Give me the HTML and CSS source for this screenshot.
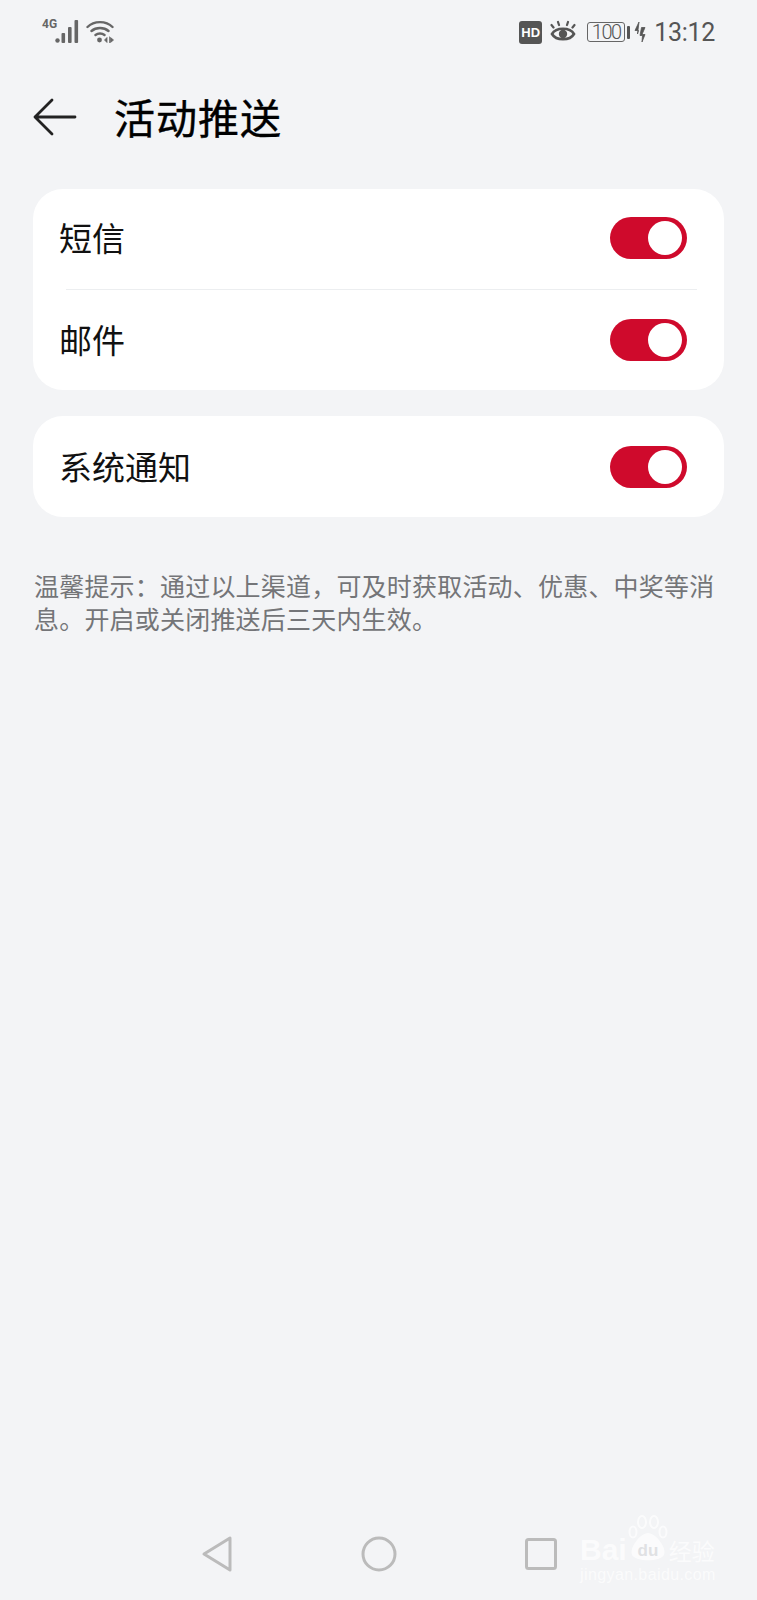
FILE: index.html
```html
<!DOCTYPE html>
<html lang="zh-CN">
<head>
  <meta charset="UTF-8">
  <meta name="viewport" content="width=device-width, initial-scale=1.0">
  <title>活动推送</title>
  <link rel="stylesheet" href="styles.css">
</head>
<body>
  <div class="page">
    <!-- Status bar -->
    <div class="status-bar">
      <div class="status-left">
        <span class="net-label">4G</span>
        <svg class="signal" width="25" height="24" viewBox="0 0 25 24">
          <circle cx="2.500" cy="20.500" r="2.200" fill="#666"/>
          <rect x="6.500" y="13" width="3.600" height="10" rx="1" fill="#666"/>
          <rect x="13" y="7" width="3.600" height="16" rx="1" fill="#666"/>
          <rect x="19.500" y="0" width="3.600" height="23" rx="1" fill="#666"/>
        </svg>
        <svg class="wifi" width="28" height="24" viewBox="0 0 28 24">
          <path d="M1.500 7C8 0.500 20 0.500 26.500 7M5.500 11C10 7 18 7 22.500 11M9.500 15C12 13 16 13 18.500 15" fill="none" stroke="#666" stroke-width="2.400" stroke-linecap="round"/>
          <circle cx="13.500" cy="20" r="2.400" fill="#666"/>
          <path d="M18.500 20L21 17.500V22.500ZM23.500 16.500V23M24.500 17.500L27.500 20L24.500 22.500Z" fill="#666" stroke="#666" stroke-width="0.800"/>
        </svg>
      </div>
      <div class="status-right">
        <span class="hd-badge">HD</span>
        <svg class="eye" width="26" height="24" viewBox="0 0 26 24">
          <path d="M2 14C6 7 20 7 24 14C20 21 6 21 2 14Z" fill="none" stroke="#555" stroke-width="2.600"/>
          <circle cx="13" cy="14" r="4.200" fill="#555"/>
          <path d="M3.500 7.500L1.500 5M9 5L8 2M17 5L18 2M22.500 7.500L24.500 5" stroke="#555" stroke-width="2.200" stroke-linecap="round"/>
        </svg>
        <span class="battery">100</span>
        <span class="battery-tip"></span>
        <svg class="bolt" width="12" height="20" viewBox="0 0 12 20">
          <path d="M5 0L1 8.500H4.500L3.500 12ZM7.500 5.500H11L8 12.500H11L8 20L8.500 13.500H6Z" fill="#555" stroke="#555" stroke-width="0.800" stroke-linejoin="round"/>
        </svg>
        <span class="time">13:12</span>
      </div>
    </div>

    <!-- Title bar -->
    <div class="title-bar">
      <svg class="back" width="44" height="38" viewBox="0 0 44 38">
        <path d="M42 19H2M19 2L2 19L19 36" fill="none" stroke="#222" stroke-width="2.800" stroke-linecap="round" stroke-linejoin="round"/>
      </svg>
      <h1>活动推送</h1>
    </div>

    <!-- Settings -->
    <div class="card">
      <div class="row row-first">
        <span class="label">短信</span>
        <span class="toggle"><span class="knob"></span></span>
      </div>
      <div class="divider"></div>
      <div class="row">
        <span class="label">邮件</span>
        <span class="toggle"><span class="knob"></span></span>
      </div>
    </div>

    <div class="card">
      <div class="row row-single">
        <span class="label">系统通知</span>
        <span class="toggle"><span class="knob"></span></span>
      </div>
    </div>

    <p class="hint">温馨提示：通过以上渠道，可及时获取活动、优惠、中奖等消息。开启或关闭推送后三天内生效。</p>

    <!-- Navigation bar -->
    <div class="nav-bar">
      <svg width="32" height="38" viewBox="0 0 32 38">
        <path d="M29 3V35L3 19Z" fill="none" stroke="#bbb" stroke-width="3" stroke-linejoin="round"/>
      </svg>
      <svg width="36" height="36" viewBox="0 0 36 36">
        <circle cx="18" cy="18" r="16" fill="none" stroke="#bbb" stroke-width="3"/>
      </svg>
      <svg width="32" height="32" viewBox="0 0 32 32">
        <rect x="1.500" y="1.500" width="29" height="29" rx="2" fill="none" stroke="#bbb" stroke-width="3"/>
      </svg>
    </div>

    <!-- Watermark -->
    <div class="watermark">
      <div class="mark-top">
        <span class="mark-bai">Bai</span>
        <svg class="paw" width="42" height="50" viewBox="0 0 42 50">
          <ellipse cx="15" cy="7" rx="4" ry="6" fill="none" stroke="#fff" stroke-width="2"/>
          <ellipse cx="27" cy="7" rx="4" ry="6" fill="none" stroke="#fff" stroke-width="2"/>
          <ellipse cx="6" cy="17" rx="3.500" ry="5.500" fill="none" stroke="#fff" stroke-width="2"/>
          <ellipse cx="36" cy="17" rx="3.500" ry="5.500" fill="none" stroke="#fff" stroke-width="2"/>
          <path d="M21 18C29 18 40 33 37 40C33 47 9 47 5 40C2 33 13 18 21 18Z" fill="#fff"/>
          <text class="paw-text" x="21" y="41" text-anchor="middle">du</text>
        </svg>
        <span class="mark-cn">经验</span>
      </div>
      <div class="mark-url">jingyan.baidu.com</div>
    </div>
  </div>
</body>
</html>
```

FILE: styles.css
```css
body {
  margin: 0;
  background-color: #f3f4f6;
  font-family: "Noto Sans CJK SC", "Noto Sans", sans-serif;
  color: #111;
}
.page {
  position: relative;
  display: flex;
  flex-direction: column;
  height: 1600px;
  overflow: hidden;
}
.status-bar {
  display: flex;
  justify-content: space-between;
  align-items: center;
  height: 64px;
  padding: 0 42px;
  color: #555;
}
.status-left {
  display: flex;
  align-items: flex-start;
}
.net-label {
  font-family: "Roboto", sans-serif;
  font-size: 12px;
  font-weight: 700;
  line-height: 12px;
  color: #666;
  margin-top: -2px;
}
.signal {
  margin: 0 6px 0 -2px;
}
.status-right {
  display: flex;
  align-items: center;
}
.hd-badge {
  display: flex;
  align-items: center;
  justify-content: center;
  width: 23px;
  height: 23px;
  border-radius: 3px;
  background-color: #555;
  color: #fff;
  font-family: "Liberation Sans", sans-serif;
  font-size: 13px;
  font-weight: 700;
  margin-right: 8px;
}
.eye {
  margin-right: 11px;
}
.battery {
  width: 38px;
  height: 20px;
  border: 1px solid #666;
  border-radius: 3px;
  box-sizing: border-box;
  font-family: "Roboto", sans-serif;
  font-size: 20px;
  letter-spacing: -1.500px;
  line-height: 18px;
  text-align: center;
  font-weight: 300;
}
.battery-tip {
  width: 3px;
  height: 13px;
  border-radius: 1px;
  background-color: #555;
  margin: 0 4px 0 2px;
}
.time {
  font-family: "Roboto", sans-serif;
  font-size: 25px;
  letter-spacing: -0.300px;
  margin-left: 8px;
}
.title-bar {
  display: flex;
  align-items: center;
  height: 106px;
  padding: 0 0 2px 33px;
  box-sizing: border-box;
}
.back {
  margin-top: 2px;
}
.title-bar h1 {
  margin: 0 0 0 37px;
  font-size: 41px;
  font-weight: 400;
  letter-spacing: 1px;
  line-height: 50px;
  color: #000;
  -webkit-text-stroke: 0.4px #000;
}
.card {
  margin: 19px 33px 0;
  background-color: #fff;
  border-radius: 30px;
  overflow: hidden;
}
.card + .card {
  margin-top: 26px;
}
.row {
  display: flex;
  justify-content: space-between;
  align-items: center;
  height: 100px;
  padding: 0 37px 0 26px;
  box-sizing: border-box;
  font-size: 33px;
  line-height: 40px;
}
.label {
  margin-top: -2px;
}
.row-first {
  padding-bottom: 2px;
}
.row-single {
  height: 101px;
}
.divider {
  height: 1px;
  margin: 0 27px 0 33px;
  background-color: #eceef0;
}
.toggle {
  display: flex;
  justify-content: flex-end;
  align-items: center;
  width: 77px;
  height: 42px;
  padding-right: 5px;
  box-sizing: border-box;
  border-radius: 21px;
  background-color: #cf0a2c;
}
.knob {
  width: 34px;
  height: 34px;
  border-radius: 50%;
  background-color: #fff;
}
.hint {
  margin: 52px 33px 0 34px;
  font-size: 25px;
  line-height: 33px;
  color: #747578;
  letter-spacing: 0.2px;
}
.nav-bar {
  display: flex;
  justify-content: center;
  align-items: center;
  gap: 128px;
  margin-top: auto;
  padding-bottom: 27px;
}
.watermark {
  position: absolute;
  left: 580px;
  top: 1515px;
  color: #fff;
  opacity: 0.7;
}
.mark-top {
  display: flex;
  align-items: flex-end;
  height: 50px;
}
.mark-bai {
  font-family: "Liberation Sans", sans-serif;
  font-size: 30px;
  font-weight: 700;
  line-height: 30px;
}
.paw-text {
  font-family: "Liberation Sans", sans-serif;
  font-size: 17px;
  font-weight: 700;
  fill: #d8d9dc;
}
.mark-cn {
  font-size: 23px;
  line-height: 30px;
}
.mark-url {
  font-family: "Liberation Sans", sans-serif;
  font-size: 16px;
  letter-spacing: 0.4px;
  line-height: 20px;
  white-space: nowrap;
}
```
